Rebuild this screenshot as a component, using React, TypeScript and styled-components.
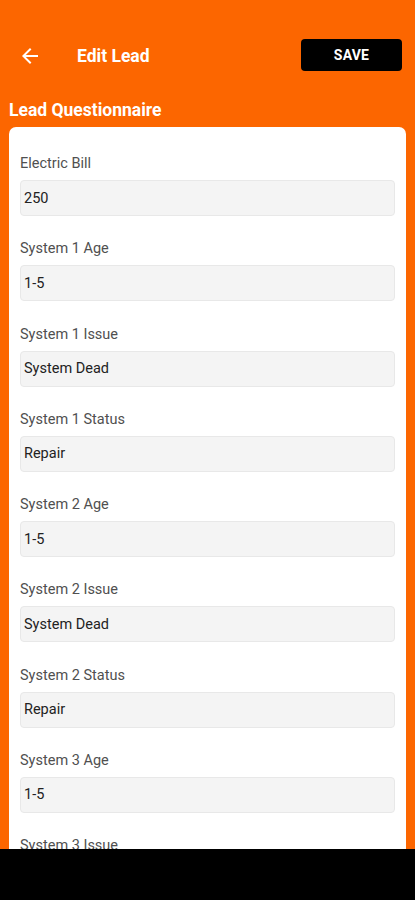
import React from "react";
import styled, { createGlobalStyle } from "styled-components";

const ORANGE = "#fc6600";

const Global = createGlobalStyle`
  html, body { margin: 0; padding: 0; background: ${ORANGE}; }
  body { font-family: Roboto, "Noto Sans", "Liberation Sans", sans-serif; -webkit-font-smoothing: antialiased; }
  * { box-sizing: border-box; }
`;

const Page = styled.div`
  min-height: 100vh;
  background: ${ORANGE};
  display: flex;
  flex-direction: column;
`;

const Header = styled.header`
  display: flex;
  align-items: center;
  height: 32px;
  margin-top: 39px;
  padding: 0 13px 0 18px;
`;

const BackButton = styled.button`
  display: flex;
  align-items: center;
  justify-content: center;
  width: 24px;
  height: 24px;
  padding: 0;
  margin-top: 2px;
  border: none;
  background: transparent;
  cursor: pointer;
`;

const Title = styled.h1`
  flex: 1;
  margin: 0 0 0 35px;
  color: #fff;
  font-size: 17.5px;
  font-weight: 700;
  line-height: 20px;
  padding-top: 2px;
`;

const SaveButton = styled.button`
  width: 101px;
  height: 32px;
  border: none;
  border-radius: 4px;
  background: #000;
  color: #fff;
  font-family: inherit;
  font-size: 14px;
  font-weight: 700;
  letter-spacing: 0.2px;
  cursor: pointer;
`;

const SectionTitle = styled.h2`
  margin: 29px 0 6px 9px;
  color: #fff;
  font-size: 17.5px;
  font-weight: 700;
  line-height: 21px;
`;

const Card = styled.section`
  margin: 0 9px;
  background: #fff;
  border-radius: 7px;
  padding: 28px 11px 40px;
  display: flex;
  flex-direction: column;
`;

const Field = styled.div`
  display: flex;
  flex-direction: column;
  margin-bottom: 24.25px;
`;

const Label = styled.label`
  font-size: 14.5px;
  line-height: 17px;
  color: #505050;
  margin-bottom: 8px;
`;

const Input = styled.div`
  height: 36px;
  display: flex;
  align-items: center;
  padding: 0 3px;
  background: #f4f4f4;
  border: 1px solid #e8e8e8;
  border-radius: 4px;
  font-size: 14.5px;
  color: #222;
`;

const NavBar = styled.div`
  position: fixed;
  left: 0;
  right: 0;
  bottom: 0;
  height: 51px;
  background: #000;
`;

const fields: [string, string][] = [
  ["Electric Bill", "250"],
  ["System 1 Age", "1-5"],
  ["System 1 Issue", "System Dead"],
  ["System 1 Status", "Repair"],
  ["System 2 Age", "1-5"],
  ["System 2 Issue", "System Dead"],
  ["System 2 Status", "Repair"],
  ["System 3 Age", "1-5"],
  ["System 3 Issue", "System Dead"],
  ["System 3 Status", "Repair"],
];

export default function App() {
  return (
    <Page>
      <Global />
      <Header>
        <BackButton aria-label="Back">
          <svg width="24" height="24" viewBox="0 0 24 24">
            <path fill="#fff" d="M20 11H7.83l5.59-5.59L12 4l-8 8 8 8 1.41-1.41L7.83 13H20v-2z" />
          </svg>
        </BackButton>
        <Title>Edit Lead</Title>
        <SaveButton>SAVE</SaveButton>
      </Header>
      <SectionTitle>Lead Questionnaire</SectionTitle>
      <Card>
        {fields.map(([label, value]) => (
          <Field key={label}>
            <Label>{label}</Label>
            <Input>{value}</Input>
          </Field>
        ))}
      </Card>
      <NavBar />
    </Page>
  );
}
